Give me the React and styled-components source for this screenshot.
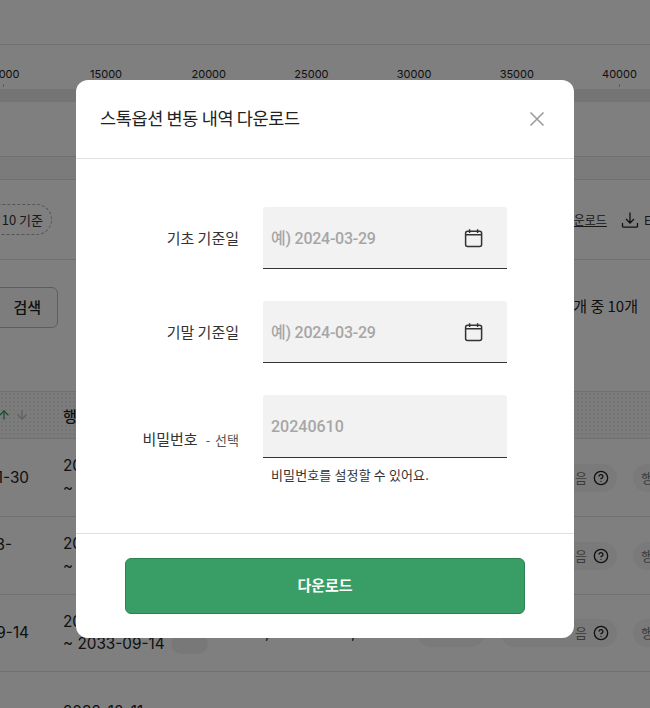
import React from "react";
import styled, { createGlobalStyle } from "styled-components";
import { CircleHelp, ArrowUp, ArrowDown } from "lucide-react";

const Global = createGlobalStyle`
  html, body { margin: 0; padding: 0; background: #fff; }
  body { font-family: "Inter", "Noto Sans CJK KR", sans-serif; color: #222; }
  #root { width: 650px; height: 708px; overflow: hidden; position: relative; }
  * { box-sizing: border-box; }
`;

const font = `"Inter", "Noto Sans CJK KR", sans-serif`;
const kr = `"Noto Sans CJK KR", "Noto Sans", sans-serif`;

const Page = styled.div`
  width: 650px;
  height: 708px;
  overflow: hidden;
  display: flex;
  flex-direction: column;
  font-family: ${font};
`;
const TopBar = styled.div`
  height: 45px;
  flex: none;
  border-bottom: 1px solid #e0e0e0;
`;
const Chart = styled.div`
  height: 111px;
  flex: none;
  display: flex;
  flex-direction: column;
  padding-top: 22px;
`;
const Axis = styled.div`
  display: flex;
  margin-left: -48px;
`;
const Tick = styled.div`
  width: 102.7px;
  flex: none;
  display: flex;
  flex-direction: column;
  align-items: center;
  font-size: 11px;
  line-height: 14px;
  color: #222;
  &::after {
    content: "";
    width: 1px;
    height: 3px;
    margin-top: 3px;
    background: #bbb;
  }
`;
const Track = styled.div`
  height: 13px;
  margin-top: 2px;
  background-color: #fafafa;
  background-image: radial-gradient(#e8e8e8 0.7px, transparent 0.8px);
  background-size: 2px 2px;
`;
const Band = styled.div`
  height: 24px;
  flex: none;
  background: #f6f6f6;
  border-top: 1px solid #e0e0e0;
  border-bottom: 1px solid #e0e0e0;
`;
const Toolbar = styled.div`
  height: 80px;
  flex: none;
  border-bottom: 1px solid #e0e0e0;
  display: flex;
  align-items: center;
  justify-content: space-between;
`;
const Chip = styled.div`
  width: 90px;
  height: 31px;
  margin-left: -38px;
  border: 1px dashed #aaa;
  border-radius: 16px;
  font-family: ${kr};
  font-size: 13px;
  line-height: 29px;
  text-align: right;
  padding-right: 8px;
  color: #333;
`;
const Exports = styled.div`
  display: flex;
  align-items: center;
  gap: 14px;
  margin-right: -1px;
  font-family: ${kr};
  font-size: 12px;
  color: #333;
`;
const ExportLink = styled.span`
  display: inline-flex;
  align-items: center;
  gap: 5px;
  text-decoration: ${(p) => (p.$plain ? "none" : "underline")};
`;
const SearchRow = styled.div`
  height: 131px;
  flex: none;
  display: flex;
  justify-content: space-between;
  align-items: flex-start;
  padding: 27px 12px 0 0;
`;
const SearchButton = styled.div`
  width: 88px;
  height: 41px;
  margin-left: -30px;
  border: 1px solid #bbb;
  border-radius: 6px;
  font-family: ${kr};
  font-size: 15px;
  font-weight: 500;
  line-height: 38px;
  text-align: right;
  padding-right: 16px;
  background-color: #fafafa;
`;
const Count = styled.div`
  font-family: ${kr};
  font-size: 15px;
  line-height: 38px;
`;
const TableHead = styled.div`
  height: 48px;
  flex: none;
  display: flex;
  align-items: center;
  font-family: ${kr};
  font-size: 15px;
  font-weight: 500;
  border-top: 1px solid #e0e0e0;
  border-bottom: 1px solid #e0e0e0;
  background-color: #f8f8f8;
  background-image: radial-gradient(#e8e8e8 0.7px, transparent 0.8px);
  background-size: 4px 4px;
`;
const Sort = styled.div`
  width: 66px;
  margin-left: -3px;
  display: flex;
  gap: 4px;
  flex: none;
`;
const Row = styled.div`
  height: ${(p) => p.$h}px;
  flex: none;
  display: flex;
  border-bottom: 1px solid #e0e0e0;
  align-items: center;
  font-size: 15.3px;
  line-height: 22px;
`;
const DateCell = styled.div`
  width: 63px;
  flex: none;
  white-space: nowrap;
  display: flex;
  flex-direction: column;
  align-items: flex-end;
  padding-right: ${(p) => p.$pad}px;
  overflow: hidden;
  color: #222;
`;
const PeriodCell = styled.div`
  width: 202px;
  flex: none;
  display: flex;
  flex-direction: column;
  margin-top: -1px;
  color: #222;
`;
const PeriodLine = styled.span`
  display: flex;
  align-items: center;
  gap: 6px;
  white-space: nowrap;
`;
const StatusBadge = styled.span`
  width: 37px;
  height: 20px;
  border-radius: 10px;
  background: #f1f1f1;
`;
const Amount = styled.div`
  width: ${(p) => p.$w}px;
  flex: none;
  white-space: nowrap;
`;
const AmountGap = styled.div`
  width: 152px;
  flex: none;
`;
const Tail = styled.div`
  display: flex;
  gap: 16px;
  flex: none;
`;
const Pill = styled.div`
  width: ${(p) => p.$w}px;
  height: 28px;
  padding: 0 8px;
  flex: none;
  border-radius: 14px;
  background: #f5f5f5;
  display: flex;
  align-items: center;
  justify-content: ${(p) => (p.$start ? "flex-start" : "flex-end")};
  gap: 6px;
  font-family: ${kr};
  font-size: 13px;
  color: #777;
`;

const Scrim = styled.div`
  position: absolute;
  inset: 0;
  background: rgba(0, 0, 0, 0.5);
`;
const Modal = styled.div`
  position: absolute;
  left: 76px;
  top: 80px;
  width: 498px;
  height: 558px;
  background: #fff;
  border-radius: 12px;
  display: flex;
  flex-direction: column;
  font-family: ${kr};
`;
const Header = styled.div`
  height: 79px;
  flex: none;
  display: flex;
  align-items: center;
  justify-content: space-between;
  padding: 0 29px 4px 24px;
  border-bottom: 1px solid #e0e0e0;
`;
const Title = styled.h2`
  margin: 0;
  font-size: 17.5px;
  font-weight: 400;
  letter-spacing: -0.35px;
  color: #222;
`;
const Close = styled.button`
  border: 0;
  background: none;
  padding: 0;
  display: flex;
  margin-top: 3px;
`;
const Body = styled.div`
  flex: 1;
  padding-top: 48px;
  display: flex;
  flex-direction: column;
  gap: 32px;
`;
const FormRow = styled.div`
  display: flex;
  align-items: center;
  gap: 24px;
`;
const Label = styled.label`
  width: 163px;
  flex: none;
  text-align: right;
  font-size: 15px;
  line-height: 22px;
  color: #333;
`;
const Optional = styled.span`
  font-size: 13px;
  word-spacing: 2px;
  color: #555;
  margin-left: 8px;
`;
const Field = styled.div`
  width: 244px;
  display: flex;
  flex-direction: column;
`;
const InputBox = styled.div`
  height: ${(p) => p.$h}px;
  background: #f2f2f2;
  border-bottom: 1px solid #333;
  border-radius: 3px 3px 0 0;
  display: flex;
  align-items: center;
  justify-content: space-between;
  padding: 0 24px 0 8px;
`;
const Placeholder = styled.span`
  font-family: "Roboto", "Noto Sans CJK KR", sans-serif;
  font-size: 16px;
  font-weight: 500;
  color: #a6a6a6;
  letter-spacing: ${(p) => (p.$tight ? "-0.25px" : "0")};
  margin-bottom: ${(p) => (p.$tight ? "2px" : "0")};
`;
const Helper = styled.div`
  font-size: 13px;
  line-height: 18px;
  letter-spacing: 0.13px;
  color: #333;
  padding: 8px 8px 0;
  height: 26px;
`;
const Footer = styled.div`
  height: 105px;
  flex: none;
  border-top: 1px solid #e0e0e0;
  padding: 24px 49px;
`;
const Submit = styled.button`
  width: 400px;
  height: 56px;
  border: 1px solid #2c8150;
  border-radius: 6px;
  padding: 0 0 3px;
  background: #399e66;
  color: #fff;
  font-family: ${kr};
  font-size: 15px;
  font-weight: 700;
`;

const Calendar = () => (
  <svg width="20" height="20" viewBox="0 0 20 20" fill="none" stroke="#333" strokeWidth="1.5">
    <rect x="2.6" y="3.2" width="16" height="15.4" rx="2" />
    <path d="M2.6 6.8h16M6.6 1.2v3.8M14.6 1.2v3.8" />
  </svg>
);

const CloseIcon = () => (
  <svg width="16" height="16" viewBox="0 0 16 16" fill="none" stroke="#999" strokeWidth="1.5">
    <path d="M1.5 1.5l13 13M14.5 1.5l-13 13" />
  </svg>
);

const DownloadIcon = () => (
  <svg width="18" height="18" viewBox="0 0 18 18" fill="none" stroke="#222" strokeWidth="1.3">
    <path d="M9 1.5v10M5 8l4 4 4-4M1.5 12v3.2a1 1 0 0 0 1 1h13a1 1 0 0 0 1-1V12" />
  </svg>
);

const ticks = ["10000", "15000", "20000", "25000", "30000", "35000", "40000"];

const rows = [
  { h: 78, date: "11-30", pad: 34, a: "20", b: "~" },
  { h: 78, date: "3-", pad: 51, second: " ", a: "20", b: "~" },
  { h: 77, date: "09-14", pad: 34, a: "20", b: "~ 2033-09-14", badge: true },
];

export default function App() {
  return (
    <>
      <Global />
      <Page>
        <TopBar />
        <Chart>
          <Axis>
            {ticks.map((t) => (
              <Tick key={t}>{t}</Tick>
            ))}
          </Axis>
          <Track />
        </Chart>
        <Band />
        <Toolbar>
          <Chip>10 기준</Chip>
          <Exports>
            <ExportLink>다운로드</ExportLink>
            <ExportLink $plain>
              <DownloadIcon />
              E
            </ExportLink>
          </Exports>
        </Toolbar>
        <SearchRow>
          <SearchButton>검색</SearchButton>
          <Count>개 중 10개</Count>
        </SearchRow>
        <TableHead>
          <Sort>
            <ArrowUp size={14} color="#1f9a5a" />
            <ArrowDown size={14} color="#bbb" />
          </Sort>
          행
        </TableHead>
        {rows.map((r) => (
          <Row key={r.date} $h={r.h}>
            <DateCell $pad={r.pad}>
              <span>{r.date}</span>
              {r.second && <span>&nbsp;</span>}
            </DateCell>
            <PeriodCell>
              <PeriodLine>{r.a}</PeriodLine>
              <PeriodLine>
                {r.b}
                {r.badge && <StatusBadge />}
              </PeriodLine>
            </PeriodCell>
            {r.badge ? (
              <>
                <Amount $w={86}>,</Amount>
                <Amount $w={66}>,</Amount>
              </>
            ) : (
              <AmountGap />
            )}
            <Tail>
              <Pill $w={68} />
              <Pill $w={116}>
                음 <CircleHelp size={16} color="#222" />
              </Pill>
              <Pill $w={40} $start>
                행
              </Pill>
            </Tail>
          </Row>
        ))}
        <Row $h={60}>
          <DateCell $pad={34} />
          <PeriodCell>
            <PeriodLine>&nbsp;</PeriodLine>
            <PeriodLine>2032-10-11</PeriodLine>
          </PeriodCell>
        </Row>
      </Page>
      <Scrim />
      <Modal>
        <Header>
          <Title>스톡옵션 변동 내역 다운로드</Title>
          <Close aria-label="닫기">
            <CloseIcon />
          </Close>
        </Header>
        <Body>
          <FormRow>
            <Label>기초 기준일</Label>
            <Field>
              <InputBox $h={62}>
                <Placeholder $tight>예) 2024-03-29</Placeholder>
                <Calendar />
              </InputBox>
            </Field>
          </FormRow>
          <FormRow>
            <Label>기말 기준일</Label>
            <Field>
              <InputBox $h={62}>
                <Placeholder $tight>예) 2024-03-29</Placeholder>
                <Calendar />
              </InputBox>
            </Field>
          </FormRow>
          <FormRow>
            <Label>
              비밀번호<Optional>- 선택</Optional>
            </Label>
            <Field>
              <InputBox $h={63}>
                <Placeholder>20240610</Placeholder>
              </InputBox>
              <Helper>비밀번호를 설정할 수 있어요.</Helper>
            </Field>
          </FormRow>
        </Body>
        <Footer>
          <Submit>다운로드</Submit>
        </Footer>
      </Modal>
    </>
  );
}
